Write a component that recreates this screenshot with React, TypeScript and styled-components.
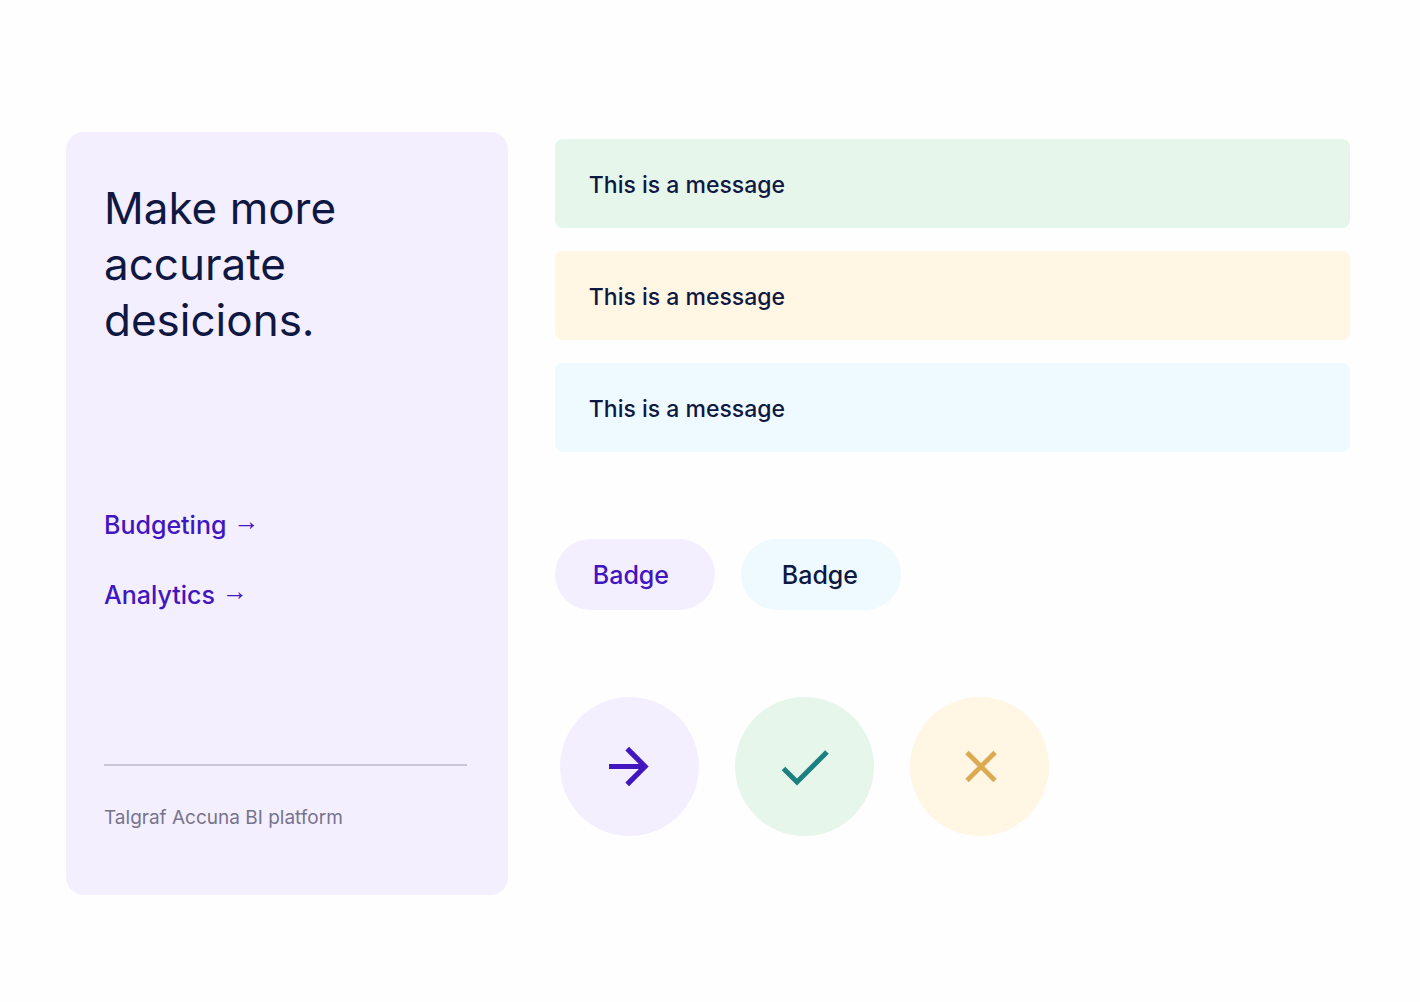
import React from "react";
import styled, { createGlobalStyle } from "styled-components";

const colors = {
  navy: "#0f1842",
  violet: "#4116c0",
  teal: "#1b807f",
  gold: "#dcaa52",
  lilac: "#f4efff",
  mint: "#e6f6ea",
  cream: "#fff6e4",
  sky: "#eefaff",
  muted: "#77738d",
  rule: "#c9c5d9",
};

const GlobalStyle = createGlobalStyle`
  * { box-sizing: border-box; }
  body {
    margin: 0;
    background: #fefefe;
    color: ${colors.navy};
    font-family: Inter, "Liberation Sans", sans-serif;
  }
`;

const Page = styled.main`
  display: grid;
  grid-template-columns: minmax(0, 5fr) minmax(0, 9fr);
  column-gap: 47px;
  align-items: start;
  padding: 132px 70px 64px 66px;
`;

const Card = styled.section`
  padding: 48px 41px 65px 38px;
  border-radius: 18px;
  background: ${colors.lilac};
`;

const Title = styled.h1`
  max-width: 280px;
  margin: 0;
  font-size: 44px;
  font-weight: 400;
  line-height: 56px;
`;

const Links = styled.nav`
  display: flex;
  flex-direction: column;
  align-items: flex-start;
  gap: 38px;
  margin: 161px 0 153px;
`;

const CardLink = styled.a`
  display: flex;
  align-items: flex-start;
  gap: 7px;
  color: ${colors.violet};
  font-size: 25px;
  font-weight: 500;
  line-height: 32px;
  text-decoration: none;
`;

const LinkArrow = styled.span`
  font-family: "Liberation Serif", serif;
  font-size: 26px;
  font-weight: 400;
  line-height: 26px;
`;

const Footnote = styled.p`
  margin: 0;
  padding-top: 40px;
  border-top: 2px solid ${colors.rule};
  color: ${colors.muted};
  font-size: 19px;
  line-height: 24px;
`;

const Showcase = styled.div`
  display: flex;
  flex-direction: column;
  gap: 87px;
  padding-top: 7px;
`;

const Messages = styled.div`
  display: flex;
  flex-direction: column;
  gap: 23px;
`;

const Message = styled.p<{ $fill: string }>`
  margin: 0;
  padding: 32px 34px 29px;
  border-radius: 8px;
  background: ${(p) => p.$fill};
  font-size: 23px;
  font-weight: 500;
  line-height: 28px;
`;

const Badges = styled.div`
  display: flex;
  gap: 26px;
`;

const Badge = styled.span<{ $fill: string; $ink: string; $inset: number }>`
  min-width: 160px;
  padding: 20px ${(p) => p.$inset}px 19px;
  border-radius: 36px;
  background: ${(p) => p.$fill};
  color: ${(p) => p.$ink};
  font-size: 25px;
  font-weight: 500;
  line-height: 32px;
`;

const Icons = styled.div`
  display: flex;
  gap: 36px;
  padding-left: 5px;
`;

const IconCircle = styled.span<{ $fill: string; $ink: string }>`
  display: grid;
  place-items: center;
  width: 139px;
  height: 139px;
  border-radius: 50%;
  background: ${(p) => p.$fill};
  color: ${(p) => p.$ink};
`;

const Glyph = styled.svg`
  width: 64px;
  height: 64px;
  fill: none;
  stroke: currentColor;
`;

export default function App() {
  return (
    <>
      <GlobalStyle />
      <Page>
        <Card>
          <Title>Make more accurate desicions.</Title>
          <Links>
            <CardLink href="#budgeting">
              Budgeting <LinkArrow>→</LinkArrow>
            </CardLink>
            <CardLink href="#analytics">
              Analytics <LinkArrow>→</LinkArrow>
            </CardLink>
          </Links>
          <Footnote>Talgraf Accuna BI platform</Footnote>
        </Card>
        <Showcase>
          <Messages>
            <Message $fill={colors.mint}>This is a message</Message>
            <Message $fill={colors.cream}>This is a message</Message>
            <Message $fill={colors.sky}>This is a message</Message>
          </Messages>
          <Badges>
            <Badge $fill={colors.lilac} $ink={colors.violet} $inset={38}>Badge</Badge>
            <Badge $fill={colors.sky} $ink={colors.navy} $inset={41}>Badge</Badge>
          </Badges>
          <Icons>
            <IconCircle $fill={colors.lilac} $ink={colors.violet}>
              <Glyph viewBox="0 0 64 64" strokeWidth="5.2" aria-hidden="true">
                <path d="M12 31.5H47M30.2 13.7L48 31.5L30.2 49.3" />
              </Glyph>
            </IconCircle>
            <IconCircle $fill={colors.mint} $ink={colors.teal}>
              <Glyph viewBox="0 0 64 64" strokeWidth="5" aria-hidden="true">
                <path d="M11.5 33.5L25 47L55 17" />
              </Glyph>
            </IconCircle>
            <IconCircle $fill={colors.cream} $ink={colors.gold}>
              <Glyph viewBox="0 0 64 64" strokeWidth="4.8" aria-hidden="true">
                <path d="M20 17.5L48 45.5M48 17.5L20 45.5" />
              </Glyph>
            </IconCircle>
          </Icons>
        </Showcase>
      </Page>
    </>
  );
}
